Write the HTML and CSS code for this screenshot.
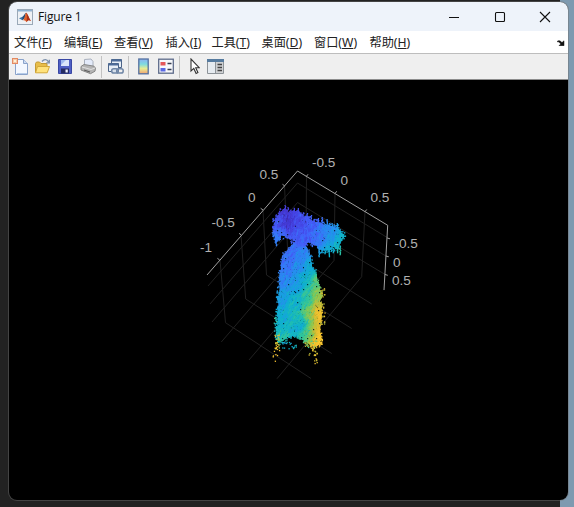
FILE: index.html
```html
<!DOCTYPE html>
<html lang="zh-CN">
<head>
<meta charset="utf-8">
<title>Figure 1</title>
<link rel="stylesheet" href="styles.css">
</head>
<body>
<main class="window">
  <header class="titlebar">
    <svg class="logo" width="16" height="16" viewBox="0 0 16 16">
      <rect x=".5" y=".5" width="15" height="15" fill="#eef1f5" stroke="#9aa9b8"/>
      <path d="M1 1h14v1.5H1z" fill="#8fb2d2"/>
      <path d="M2 9.3 5.5 7.7 7.5 9 5.3 11.3z" fill="#3c77aa"/>
      <path d="M5.5 7.7C7 7 8 3.8 9 3.8L7.7 9.2 5.3 11.3z" fill="#254c78"/>
      <path d="M9 3.8C10.5 4 11.7 9 14 12c-2-1.2-3-.8-4.5 1.2C8.7 12 7.7 11 6 11.5 8 9.5 8 5 9 3.8z" fill="#e0622a"/>
      <path d="M9 3.8c1 1 1.2 4 .6 9.3C11 11 12 11 14 12 11.7 9 10.5 4 9 3.8z" fill="#a8301c"/>
    </svg>
    <span class="title">Figure 1</span>
    <div class="controls">
      <svg width="12" height="12" viewBox="0 0 12 12"><path d="M1 6.5h10"/></svg>
      <svg width="12" height="12" viewBox="0 0 12 12"><rect x="1.5" y="1.5" width="9" height="9" rx="1"/></svg>
      <svg width="12" height="12" viewBox="0 0 12 12"><path d="M1 1l10 10M11 1 1 11"/></svg>
    </div>
  </header>
  <nav class="menu">
    <span>文件(<u>F</u>)</span><span>编辑(<u>E</u>)</span><span>查看(<u>V</u>)</span><span>插入(<u>I</u>)</span><span>工具(<u>T</u>)</span><span>桌面(<u>D</u>)</span><span>窗口(<u>W</u>)</span><span>帮助(<u>H</u>)</span>
    <svg class="dock" width="8" height="6" viewBox="0 0 8 6"><path d="M.3 1.2C2 .2 3.5.7 5 2.6L7 .8v4.9H2L3.7 4C2.7 2.3 1.8 1.8.3 1.8z" fill="#111" stroke="#111" stroke-width=".5"/></svg>
  </nav>
  <div class="toolbar">
    <svg class="new" width="16" height="17" viewBox="0 0 16 17">
      <path d="M3.5 1.5h8l4 4v11h-12z" fill="#f3f8ff" stroke="#8aa3ca"/>
      <path d="M11.5 1.5v4h4" fill="#cbdcf3" stroke="#8aa3ca"/>
      <path d="M5 15.5h10" stroke="#b6cce9"/>
      <rect x=".5" y=".5" width="5" height="5" fill="#f6c9a8" stroke="#e38a62"/><path d="M2 2h2v2H2z" fill="#fff3d5"/>
    </svg>
    <svg class="open" width="17" height="17" viewBox="0 0 17 17">
      <path d="M1.5 14.5v-9l1-1.5h3l1.5 1.5h6v3" fill="#e8bd48" stroke="#c39a35"/>
      <path d="M1.5 14.8 3.5 8.5h12l-2.3 6.3z" fill="#ffe27b" stroke="#d3a838"/>
      <path d="M8 3.5C10 .8 13 1 14.5 4M15.3 1.8v3h-3" fill="none" stroke="#7c90ab" stroke-width="1.3"/>
    </svg>
    <svg class="save" width="16" height="17" viewBox="0 0 16 17">
      <path d="M1.5 1.5h13v14h-13z" fill="#4f5fc4" stroke="#3a48a4"/>
      <path d="M4 2h8v6H4z" fill="#dbe6fb"/><path d="M4 2h5L4 7z" fill="#9fbaf0"/>
      <path d="M4 10.5h8v5H4z" fill="#252b62"/><path d="M8.5 11.5h2.3v3H8.5z" fill="#eef2ff"/>
    </svg>
    <svg class="print" width="16" height="17" viewBox="0 0 16 17">
      <path d="M4.5 8V1.5L11 1l2 2.5V9" fill="#e4ebfa" stroke="#a9b0bd"/>
      <path d="M1 8.5 4 6.5l10 1.7 1.5 2-.5 3-4.5 2.5L1 12z" fill="#b4b4b4" stroke="#868686"/>
      <path d="m2 9 9 2.5 4-1.5" fill="none" stroke="#e0e0e0"/><path d="m4 12 6 2" stroke="#5f5f5f" stroke-width="1.3"/>
    </svg>
    <i></i>
    <svg class="link" width="17" height="17" viewBox="0 0 17 17">
      <path d="M4.5 1.5h10v8h-10z" fill="#e8eff7" stroke="#4c6488"/><path d="M4.5 2.5h10" stroke="#4d6c9a" stroke-width="2"/>
      <path d="M1.5 5.5h10v8h-10z" fill="#e8eff7" stroke="#4c6488"/><path d="M1.5 6.5h10" stroke="#4d6c9a" stroke-width="2"/>
      <rect x="4.7" y="10.7" width="6.5" height="4.3" rx="2.1" fill="#d5dfeb" stroke="#6f86a6" stroke-width="1.5"/><rect x="9.7" y="10.7" width="6.5" height="4.3" rx="2.1" fill="none" stroke="#6f86a6" stroke-width="1.5"/>
    </svg>
    <i></i>
    <svg class="bar" width="11" height="17" viewBox="0 0 11 17">
      <defs><linearGradient id="g" x1="0" y1="0" x2="0" y2="1"><stop offset="0" stop-color="#8db0f2"/><stop offset=".35" stop-color="#7edbe0"/><stop offset=".65" stop-color="#eaed91"/><stop offset="1" stop-color="#f0a071"/></linearGradient></defs>
      <rect x=".8" y="1" width="9.4" height="14.8" fill="url(#g)" stroke="#54709f" stroke-width="1.3"/>
    </svg>
    <svg class="legend" width="16" height="17" viewBox="0 0 16 17">
      <rect x=".7" y="1.2" width="14.6" height="14" fill="#f7f8fb" stroke="#5d6b8a" stroke-width="1.3"/>
      <path d="M2.5 4h5v3.5h-5z" fill="#e4575a"/><path d="M2.5 10h5v3.5h-5z" fill="#5a68e4"/>
      <path d="M9.5 5.5h4M9.5 11.5h4" stroke="#333b4e" stroke-width="1.4"/>
    </svg>
    <i></i>
    <svg class="arrow" width="10" height="17" viewBox="0 0 10 17"><path d="M1 1v12l2.8-2.6 2.3 5 1.8-.9-2.2-4.8H9.2z" fill="#fff" stroke="#333" stroke-width="1.1"/></svg>
    <svg class="insp" width="17" height="17" viewBox="0 0 17 17">
      <path d="M.5 1.5h16v14H.5z" fill="#e6ebf0" stroke="#8d9398"/><path d="M0 1h17v3H0z" fill="#567b9f"/>
      <path d="M9 4h7v11H9z" fill="#cfd1d3"/><path d="M8.5 4v11.5" stroke="#8d9398"/>
      <path d="M10.5 6.5H15M10.5 9.5H15M10.5 12.5H15" stroke="#444" stroke-width="1.3"/>
    </svg>
  </div>
  <section class="figure">
    <svg class="axes" width="559" height="420" viewBox="9 80 559 420">
      <g class="grid">
        <path d="M208 286 297.5 183 388 238M210 304 297.5 202.5 387.5 257M212 322 297.5 222 386 275"/>
        <path d="M306.5 176.5 306 243.5M335 193.5 334 260.5M365 211.5 361.7 276.7"/>
        <path d="M284.5 186 287.7 251.5M263 210 266.5 275M241 235 245.7 299M220 260 225.5 322.7"/>
        <path d="M287.7 251.5 371.7 304M266.5 275 351.7 328.5M245.7 299 331.7 353.5M225.5 322.7 311 378.5"/>
        <path d="M306 243.5 221.3 342M334 260.5 249 360M361.7 276.7 277 378.7"/>
      </g>
      <path class="axis" d="M207 275 297.5 171 387.7 225.3 384 290M284.8 186l-2.3-1.7M263 210l-2.3-1.7M241.3 235l-2.3-1.7M219.7 260l-2.3-1.7M306.3 176.5l1.7-2.2M335 193.5l1.7-2.2M365 211.7l1.7-2.2M387.2 238l2.8.8M386 256l2.8.8M385 274.5l2.8.8"/>
      <g class="labels">
        <text x="259.5" y="178.5">0.5</text><text x="248" y="202">0</text><text x="211.5" y="227">-0.5</text><text x="200" y="252">-1</text>
        <text x="312" y="167">-0.5</text><text x="340.5" y="184.5">0</text><text x="370.5" y="202">0.5</text>
        <text x="394.5" y="248">-0.5</text><text x="393" y="266.5">0</text><text x="392" y="284.5">0.5</text>
      </g>
    </svg>
    <canvas class="cloud" id="cloud" width="559" height="420"></canvas>
  </section>
</main>
<script src="cloud.js"></script>
</body>
</html>
```
FILE: styles.css
```css
* { box-sizing: border-box; }
body {
  margin: 0;
  width: 574px;
  height: 507px;
  overflow: hidden;
  padding: 2px 6px 7px 9px;
  background: linear-gradient(90deg, #222 560px, #7e9ab0 560px);
  font-family: "Noto Sans", "Noto Sans CJK SC", sans-serif;
}
.window {
  width: 559px;
  height: 498px;
  border-radius: 8px;
  overflow: hidden;
  background: #000;
  display: flex;
  flex-direction: column;
  box-shadow: 0 0 0 1px rgba(110, 110, 110, .45);
}
.titlebar {
  height: 29px;
  flex: none;
  display: flex;
  align-items: center;
  padding: 0 17px 0 8px;
  background: #eef3fa;
}
.title {
  margin-left: 5px;
  font: 12px "Open Sans", sans-serif;
  letter-spacing: -.15px;
  color: #111;
}
.controls {
  margin-left: auto;
  display: flex;
  gap: 33.5px;
}
.controls svg { fill: none; stroke: #111; stroke-width: 1.1; }
.menu {
  height: 22px;
  flex: none;
  display: grid;
  grid-template-columns: 50px 50px 51.5px 46px 50px 52.5px 55.5px auto 8px;
  align-items: center;
  padding: 1px 3px 0 5px;
  background: #fff;
  color: #222;
  font-size: 12.2px;
  line-height: 20px;
  white-space: nowrap;
}
.menu u { text-underline-offset: 1px; }
.toolbar {
  height: 27px;
  flex: none;
  display: flex;
  align-items: center;
  padding: 0 3px;
  background: #efefef;
  border-top: 1px solid #bdbdbd;
  border-bottom: 1px solid #8c8c8c;
}
.toolbar svg { flex: none; position: relative; top: -.5px; }
.toolbar i { width: 1px; height: 22px; background: #c2c2c2; }
.open { margin-left: 6px; }
.save { margin-left: 6px; }
.print { margin: 0 5px 0 7px; }
.link { margin: 0 4px 0 5px; }
.bar { margin-left: 9px; }
.legend { margin: 0 5px 0 9px; }
.arrow { margin-left: 10px; }
.insp { margin-left: 7px; }
.figure { height: 420px; display: grid; }
.axes, .cloud { grid-area: 1 / 1; display: block; }
.grid { fill: none; stroke: #212121; stroke-width: 1; }
.axis { fill: none; stroke: #a0a0a0; stroke-width: 1; }
.labels { font: 13.6px "Liberation Sans", Arial, sans-serif; fill: #b0b0b0; }
```
FILE: cloud.js
```js
const ctx = document.getElementById('cloud').getContext('2d');
ctx.translate(-9, -80);

let seed = 20;
const rnd = () => {
  seed = (seed * 1664525 + 1013904223) % 4294967296;
  return seed / 4294967296;
};

const parula = [[62,38,168],[71,65,225],[67,103,253],[38,146,238],[14,177,208],[48,198,158],[130,202,88],[218,188,48],[254,198,50],[249,235,40]];
function color(t) {
  const v = Math.max(0, Math.min(0.999, t)) * 9, i = Math.floor(v), f = v - i;
  return `rgb(${parula[i].map((c, k) => Math.round(c + (parula[i + 1][k] - c) * f)).join(',')})`;
}

// x, y, colour value
const armField = [[284,208,.08],[275,222,.17],[276,238,.27],[287,222,.08],[300,222,.15],[312,222,.2],[303,238,.2],[318,236,.26],[330,232,.32],[342,238,.45],[332,250,.42],[340,252,.52]];
const bodyField = [[300,240,.22],[290,250,.25],[304,252,.3],[312,265,.42],[287,265,.25],[298,265,.32],[283,280,.3],[295,285,.36],[308,280,.47],[316,282,.62],[281,300,.38],[295,303,.45],[308,300,.56],[319,295,.7],[319,306,.76],[279,320,.44],[290,325,.46],[300,322,.48],[310,315,.65],[316,315,.84],[320,315,.88],[279,336,.48],[292,333,.43],[298,328,.42],[304,335,.56],[312,335,.7],[319,335,.88],[318,345,.9],[283,339,.55]];
function sample(field, x, y) {
  let s = 0, w = 0;
  for (const [a, b, v] of field) {
    const k = 1 / ((x - a) ** 2 + (y - b) ** 2 + 14) ** 1.9;
    s += v * k; w += k;
  }
  return s / w;
}

const arm = [[274,225],[277,217],[281,212],[284,209],[287,209],[288,212],[293,211],[299,212],[302,215],[307,217],[311,220],[317,222],[323,224],[330,226],[337,228],[341,232],[344,236],[341,241],[339,245],[338,249],[334,248],[328,250],[324,250],[319,250],[317,246],[309,242],[304,246],[297,244],[294,240],[288,238],[284,235],[280,237],[276,242],[275,238],[274,231]];
const body = [[294,243],[289,249],[284,255],[281,265],[280,280],[278.5,300],[277.5,320],[276.5,332],[278,343],[284,339],[290,337],[297,336],[305,341],[314,347],[320,344],[320,327],[321,315],[321,295],[318,283],[316,275],[312,267],[310,256],[306,247],[300,241]];

const path = p => {
  const r = new Path2D();
  p.forEach(([x, y], i) => i ? r.lineTo(x, y) : r.moveTo(x, y));
  r.closePath();
  return r;
};
function dot(x, y, t, size) {
  ctx.fillStyle = color(t);
  ctx.fillRect(x, y, size, size);
}
function fill(shape, field, count, slope, fringe) {
  const p = path(shape);
  ctx.fillStyle = color(.3);
  const inside = (x, y) => {
    ctx.save();
    ctx.setTransform(1, 0, 0, 1, 0, 0);
    const r = ctx.isPointInPath(p, x, y);
    ctx.restore();
    return r;
  };
  for (let i = 0; i < count; i++) {
    const x = 268 + rnd() * 82, y = 200 + rnd() * 152;
    if (inside(x, y)) dot(x - .7, y - .7, sample(field, x, y) + (rnd() - .5) * .08, 1.4);
  }
  // short streaks across the surface
  for (let i = 0; i < count / 18; i++) {
    const x = 268 + rnd() * 82, y = 200 + rnd() * 152;
    if (!inside(x, y)) continue;
    const d = (rnd() - .5) * .17, n = 2 + rnd() * 3;
    for (let k = 0; k < n; k++)
      if (inside(x + k * slope, y - k)) dot(x + k * slope, y - k, sample(field, x, y) + d, 1);
  }
  // ragged outline
  shape.forEach(([x, y], i) => {
    const [a, b] = shape[(i + 1) % shape.length];
    const n = Math.ceil(Math.hypot(a - x, b - y) * 1.1);
    for (let k = 0; k < n; k++) {
      const f = rnd();
      const px = x + (a - x) * f + (rnd() - .5) * 4, py = y + (b - y) * f + (rnd() - .5) * fringe;
      dot(px - .7, py - .7, sample(field, px, py), 1.4);
    }
  });
}
fill(body, bodyField, 26000, .6, 5);
fill(arm, armField, 26000, .1, 6);

// vertical tufts around the arm
for (const [x, y, h] of [[276,240,6],[279,237,4],[319,249,8],[322,249,4],[325,249,5],[329,249,8],[333,248,5],[337,247,6],[340,246,9],[285,205,4],[288,207,3],[294,209,3],[298,208,4],[307,213,4],[311,215,4],[318,218,4],[322,217,6],[327,219,5],[332,223,4],[337,223,5],[273,218,4],[273,232,5]])
  for (let k = 0; k < h; k++) dot(x + rnd() * .8 - .7, y + k, sample(armField, x, y + k) + .02, 1.3);

// dark gaps between points
ctx.fillStyle = 'rgba(0, 20, 35, .85)';
for (const [x, y] of [[294,291],[295,292],[298,290],[288,284],[304,274],[283,323],[300,309],[303,289],[307,284],[297,302],[318,310],[313,329],[319,323],[312,258],[308,244],[287,234],[334,230],[322,240],[319,292],[316,286],[320,301],[311,335],[316,338],[307,338],[301,337],[292,336],[287,337],[282,338],[341,237],[337,242],[330,246],[324,247],[278,221],[277,230],[281,232],[283,268],[285,258],[303,248],[309,262]])
  ctx.fillRect(x, y, 1.2, 1.2);

// stray points
function scatter(n, x, y, w, h, lo, hi) {
  for (let i = 0; i < n; i++) dot(x + rnd() * w, y + rnd() * h, lo + rnd() * (hi - lo), 1.3);
}
scatter(22, 274, 333, 5, 18, .65, .9);
scatter(11, 272.5, 345, 6, 16, .78, .92);
scatter(18, 281, 339, 14, 9, .38, .5);
scatter(20, 303, 340, 14, 8, .55, .8);
scatter(14, 308, 346, 8, 9, .7, .85);
scatter(10, 312, 351, 5, 12, .75, .88);
scatter(18, 318, 336, 4, 11, .82, .92);
scatter(30, 320, 286, 4.5, 38, .72, .85);
scatter(8, 273.5, 315, 4, 10, .45, .6);
scatter(5, 288, 343, 12, 6, .4, .5);
```
